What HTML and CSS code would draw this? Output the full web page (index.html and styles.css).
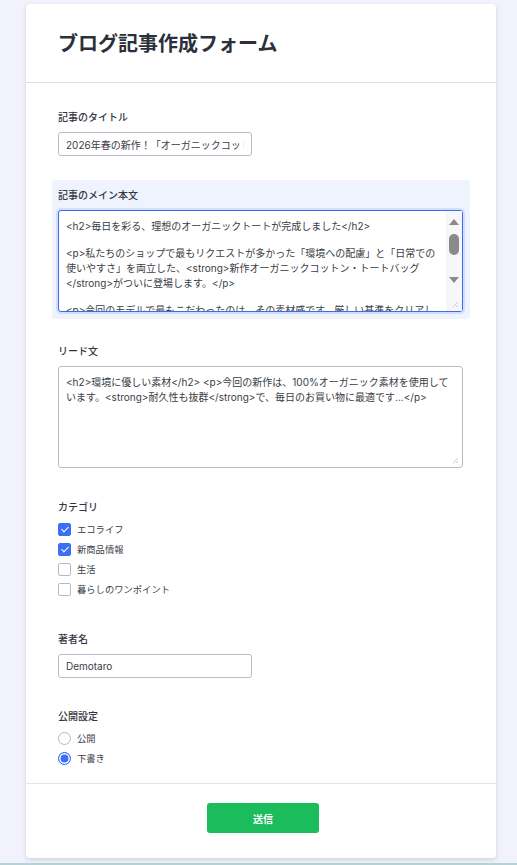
FILE: index.html
```html
<!DOCTYPE html>
<html lang="ja">
<head>
    <meta charset="utf-8">
    <title>ブログ記事作成フォーム</title>
    <link rel="stylesheet" href="styles.css">
</head>
<body>
    <div class="form-card">
        <div class="form-header">
            <h1>ブログ記事作成フォーム</h1>
        </div>

        <form class="form-body">
            <div class="field">
                <label class="field-label" for="title">記事のタイトル</label>
                <input class="text-input" id="title" type="text" value="2026年春の新作！「オーガニックコットン・トートバッグ」発売のお知らせ">
            </div>

            <!-- active field gets a tinted background -->
            <div class="field field-active">
                <label class="field-label" for="body">記事のメイン本文</label>
                <div class="area-wrap">
                    <textarea class="text-area text-area-focus" id="body"><h2>毎日を彩る、理想のオーガニックトートが完成しました</h2>

<p>私たちのショップで最もリクエストが多かった「環境への配慮」と「日常での使いやすさ」を両立した、<strong>新作オーガニックコットン・トートバッグ</strong>がついに登場します。</p>

<p>今回のモデルで最もこだわったのは、その素材感です。厳しい基準をクリアしたオーガニックコットンを使用し、やわらかな手触りと丈夫さを実現しました。</p>

<h2>たっぷり入る、使いやすいサイズ</h2>

<p>A4サイズの書類やノートパソコンもすっきり収まる大容量設計で、通勤や通学にもおすすめです。</p></textarea>
                    <!-- scrollbar for the long body text -->
                    <div class="scrollbar grip" aria-hidden="true">
                        <span class="scroll-arrow scroll-up"></span>
                        <span class="scroll-thumb"></span>
                        <span class="scroll-arrow scroll-down"></span>
                    </div>
                </div>
            </div>

            <div class="field">
                <label class="field-label" for="lead">リード文</label>
                <textarea class="text-area grip" id="lead"><h2>環境に優しい素材</h2> <p>今回の新作は、100%オーガニック素材を使用しています。<strong>耐久性も抜群</strong>で、毎日のお買い物に最適です...</p></textarea>
            </div>

            <div class="field">
                <span class="field-label">カテゴリ</span>
                <div class="option-list">
                    <label class="option"><input type="checkbox" checked> エコライフ</label>
                    <label class="option"><input type="checkbox" checked> 新商品情報</label>
                    <label class="option"><input type="checkbox"> 生活</label>
                    <label class="option"><input type="checkbox"> 暮らしのワンポイント</label>
                </div>
            </div>

            <div class="field field-spaced">
                <label class="field-label" for="author">著者名</label>
                <input class="text-input" id="author" type="text" value="Demotaro">
            </div>

            <div class="field field-status">
                <span class="field-label">公開設定</span>
                <div class="option-list">
                    <label class="option"><input type="radio" name="status"> 公開</label>
                    <label class="option"><input type="radio" name="status" checked> 下書き</label>
                </div>
            </div>
        </form>

        <div class="form-footer">
            <button class="submit-button" type="button">送信</button>
        </div>
    </div>

    <div class="page-end"></div>
</body>
</html>
```

FILE: styles.css
```css
* {
    margin: 0;
    padding: 0;
    box-sizing: border-box;
    font-family: 'Inter', 'Noto Sans CJK JP', sans-serif;
}

html {
    background-color: #f1f2fb;
}

body {
    padding-top: 4px;
}

.form-card {
    width: 470px;
    margin-left: 26px;
    background-color: #ffffff;
    border-radius: 4px;
    box-shadow: 0 2px 4px rgba(60, 64, 110, 0.18);
}

.form-header {
    padding: 28px 32px 0;
    height: 79px;
    border-bottom: 1px solid #dcdde5;
}

.form-header h1 {
    font-size: 20px;
    font-weight: 700;
    line-height: 24px;
    color: #2b303b;
}

.form-body {
    padding: 19px 26px 0;
    display: flex;
    flex-direction: column;
    gap: 17px;
}

.field {
    padding: 7px 6px;
    border-radius: 3px;
    display: flex;
    flex-direction: column;
    align-items: flex-start;
}

.field-active {
    background-color: #eef3fe;
}

.field-spaced {
    margin-top: 1px;
}

.field-status {
    margin-top: -1px;
}

.field-label {
    font-size: 10px;
    font-weight: 500;
    line-height: 16px;
    color: #333640;
    margin-bottom: 7px;
}

.text-input {
    width: 194px;
    height: 24px;
    padding: 0 7px;
    font-size: 10px;
    color: #3a3d45;
    border: 1px solid #b9bbc8;
    border-radius: 3px;
    outline: none;
}

.text-area {
    display: block;
    width: 405px;
    height: 102px;
    padding: 7px 7px;
    font-size: 10px;
    color: #3a3d45;
    border: 1px solid #b9bbc8;
    border-radius: 3px;
    outline: none;
    resize: none;
    overflow: hidden;
}

.text-area-focus {
    border-color: #3a6cf0;
    box-shadow: 0 0 0 2px rgba(58, 108, 240, 0.15);
    padding-right: 22px;
}

/* little resize grip in the bottom right corner */
.grip {
    background-image: linear-gradient(135deg, transparent 52%, #c9cad3 52%, #c9cad3 60%, transparent 60%, transparent 76%, #c9cad3 76%, #c9cad3 84%, transparent 84%);
    background-repeat: no-repeat;
    background-size: 6px 6px;
    background-position: right 4px bottom 4px;
}

.area-wrap {
    position: relative;
}

.scrollbar {
    position: absolute;
    top: 1px;
    right: 1px;
    bottom: 1px;
    width: 16px;
    background-color: #f7f7f9;
    display: flex;
    flex-direction: column;
    align-items: center;
    padding-top: 8px;
}

.scroll-arrow {
    width: 0;
    height: 0;
    border-left: 5px solid transparent;
    border-right: 5px solid transparent;
}

.scroll-up {
    border-bottom: 6px solid #8a8a8a;
}

.scroll-down {
    margin-top: 22px;
    border-top: 6px solid #8a8a8a;
}

.scroll-thumb {
    margin-top: 9px;
    width: 10px;
    height: 21px;
    border-radius: 5px;
    background-color: #8a8a8a;
}

.option-list {
    display: flex;
    flex-direction: column;
    margin-top: -3px;
}

.option {
    display: flex;
    align-items: center;
    gap: 6px;
    height: 20px;
    font-size: 9.3px;
    color: #3a3d45;
}

.option input {
    appearance: none;
    width: 13px;
    height: 13px;
    margin: 0;
    border: 1px solid #b5b8c6;
    background-color: #ffffff;
    position: relative;
}

.option input[type="checkbox"] {
    border-radius: 2px;
}

.option input[type="checkbox"]:checked {
    background-color: #3b6ff5;
    border-color: #3b6ff5;
}

/* tick drawn from two borders */
.option input[type="checkbox"]:checked::after {
    content: "";
    position: absolute;
    left: 3.5px;
    top: 1.5px;
    width: 3px;
    height: 6px;
    border: solid #ffffff;
    border-width: 0 1.5px 1.5px 0;
    transform: rotate(45deg);
}

.option input[type="radio"] {
    border-radius: 50%;
}

.option input[type="radio"]:checked {
    border: 1.5px solid #3b6ff5;
    background-color: #3b6ff5;
    box-shadow: inset 0 0 0 1.5px #ffffff;
}

.form-footer {
    margin-top: 8px;
    border-top: 1px solid #e3e4ea;
    padding: 19px 0 25px;
    display: flex;
    justify-content: center;
}

.submit-button {
    width: 112px;
    height: 30px;
    margin-left: 4px;
    background-color: #1abc5c;
    color: #ffffff;
    font-size: 10px;
    font-weight: 700;
    border: none;
    border-radius: 3px;
    cursor: pointer;
}

.page-end {
    margin-top: 5px;
    height: 4px;
    background-color: #b6d2d5;
}
```
